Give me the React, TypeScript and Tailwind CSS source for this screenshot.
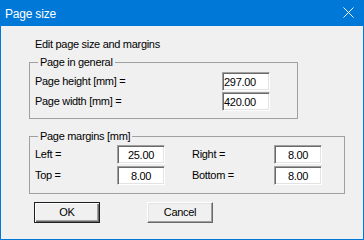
const inputBox =
	"h-[19px] w-[48px] bg-white border border-t-[#a0a0a0] border-l-[#a0a0a0] border-r-white border-b-white shadow-[inset_1px_1px_0_#696969,inset_-1px_-1px_0_#e3e3e3] outline-none text-[11px] tracking-[-0.3px] text-black";

const Field = ({ value, center }: { value: string; center?: boolean }) => (
	<input
		readOnly
		value={value}
		className={`${inputBox} ${center ? "text-center" : "pl-[1px] text-left"}`}
	/>
);

export default function App() {
	return (
		<div
			className="flex h-[240px] w-[364px] flex-col border border-[#0078d7] bg-[#f0f0f0] text-[11px] tracking-[-0.3px] text-black"
			style={{ fontFamily: '"Liberation Sans", Arial, sans-serif' }}
		>
			{/* title bar */}
			<div className="flex h-[25px] items-center justify-between bg-[#0078d7] pl-[4px] pr-[9px] text-white">
				<span className="text-[12px] tracking-[-0.2px] leading-none">Page size</span>
				<svg width="11" height="11" viewBox="0 0 11 11" className="mt-[-2px]">
					<path d="M0.5 0.5 L10.5 10.5 M10.5 0.5 L0.5 10.5" stroke="white" strokeWidth="1" />
				</svg>
			</div>

			<div className="flex flex-col pl-[28px] pt-[12px] leading-[13px]">
				<div className="ml-[6px]">Edit page size and margins</div>

				<fieldset className="mt-[5px] w-[269px] border border-[#a0a0a0] px-[5px] pb-[7px]">
					<legend className="ml-[3px] px-[2px] leading-[13px]">Page in general</legend>
					<div className="flex flex-col gap-[1px] pt-[3px]">
						<div className="flex items-center">
							<span className="w-[187px]">Page height [mm] =</span>
							<Field value="297.00" />
						</div>
						<div className="flex items-center">
							<span className="w-[187px]">Page width [mm] =</span>
							<Field value="420.00" />
						</div>
					</div>
				</fieldset>

				<fieldset className="mt-[11px] w-[316px] border border-[#a0a0a0] px-[5px] pb-[8px]">
					<legend className="ml-[3px] px-[2px] leading-[13px]">Page margins [mm]</legend>
					<div className="flex flex-col gap-[2px] pt-[2px]">
						<div className="flex items-center">
							<span className="w-[82px]">Left =</span>
							<Field value="25.00" center />
							<span className="ml-[27px] w-[82px]">Right =</span>
							<Field value="8.00" center />
						</div>
						<div className="flex items-center">
							<span className="w-[82px]">Top =</span>
							<Field value="8.00" center />
							<span className="ml-[27px] w-[82px]">Bottom =</span>
							<Field value="8.00" center />
						</div>
					</div>
				</fieldset>

				<div className="ml-[5px] mt-[8px] flex gap-[47px]">
					<button className="h-[21px] w-[66px] border border-[#1e1e1e] bg-[#f0f0f0] shadow-[inset_1px_1px_0_#ffffff,inset_-1px_-1px_0_#696969,inset_-2px_-2px_0_#a0a0a0]">
						OK
					</button>
					<button className="h-[21px] w-[66px] border border-t-white border-l-white border-r-[#696969] border-b-[#696969] bg-[#f0f0f0] shadow-[inset_-1px_-1px_0_#a0a0a0,inset_1px_1px_0_#e3e3e3]">
						Cancel
					</button>
				</div>
			</div>
		</div>
	);
}
